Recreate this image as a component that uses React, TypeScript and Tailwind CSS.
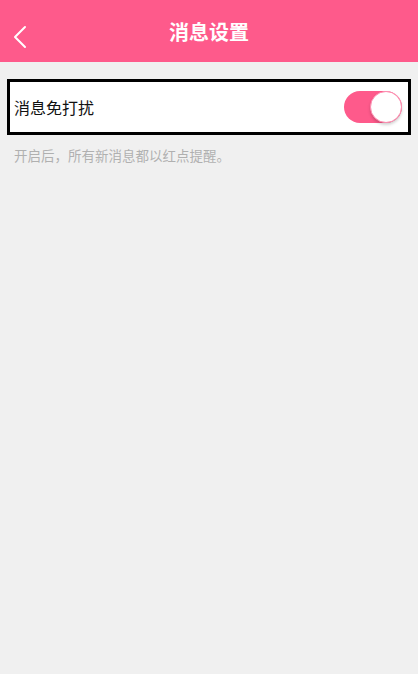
import React, { useState } from "react";

const font = { fontFamily: '"Noto Sans CJK SC", "Noto Sans", sans-serif' };

export default function App() {
  const [on, setOn] = useState(true);

  return (
    <div className="w-[418px] h-[674px] bg-[#f0f0f0] flex flex-col" style={font}>
      {/* header */}
      <div className="h-[62px] bg-[#fe5a8b] flex items-center relative shrink-0">
        <button className="absolute left-[11px] top-[24px] w-[18px] h-[26px] flex items-center justify-center">
          <svg width="14" height="24" viewBox="0 0 14 24" fill="none">
            <path d="M12 2 L2 12 L12 22" stroke="white" strokeWidth="2" strokeLinecap="round" strokeLinejoin="round" />
          </svg>
        </button>
        <h1 className="w-full text-center text-white text-[20px] font-bold leading-none pt-[2px]">消息设置</h1>
      </div>

      {/* setting row */}
      <div className="mt-[17px] mx-[7px] h-[56px] border-[3px] border-black bg-white flex items-center justify-between pl-[4px] pr-[6px]">
        <span className="text-[16px] text-[#111] leading-none">消息免打扰</span>
        <button
          onClick={() => setOn(!on)}
          className={`w-[58px] h-[32px] rounded-full flex items-center ${on ? "bg-[#fe5a8b] justify-end" : "bg-[#e5e5e5] justify-start"}`}
        >
          <span className="w-[32px] h-[32px] rounded-full bg-white border border-[#fe8db0] shadow-[0_2px_3px_rgba(0,0,0,0.18)]" />
        </button>
      </div>

      <p className="mt-[14px] ml-[14px] text-[13.5px] text-[#b0b0b0] leading-none">开启后，所有新消息都以红点提醒。</p>
    </div>
  );
}
